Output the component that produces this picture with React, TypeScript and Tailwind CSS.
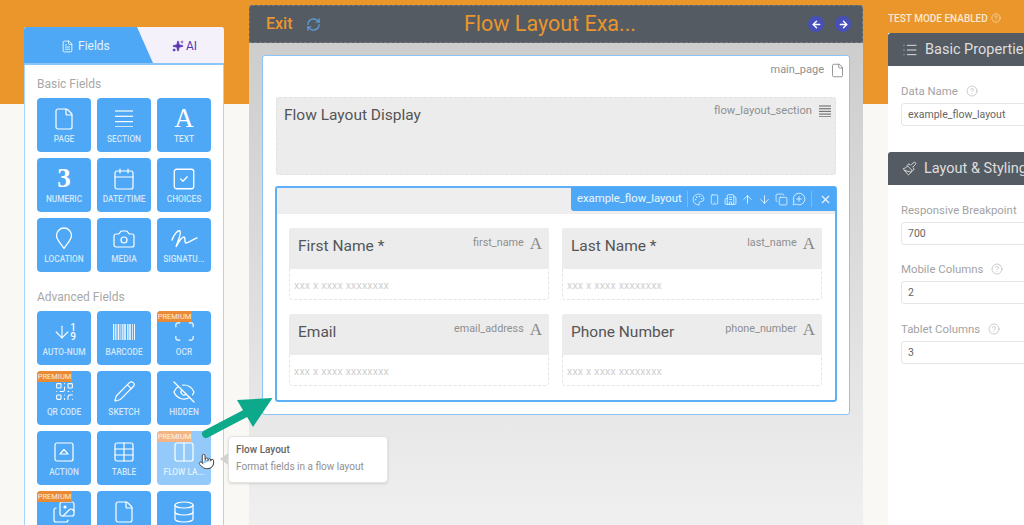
import React from "react";
import {
  File, Calendar, SquareCheck, Camera, ArrowDown, Scan, QrCode, Pencil, EyeOff, Table, Columns2, Images, Database,
  Palette, Smartphone, ArrowUp, Copy, MessageCirclePlus, X, Sparkles, RefreshCw, ArrowLeft, ArrowRight, CircleHelp, List, Paintbrush, FileText, Pointer, Building2,
} from "lucide-react";

const ic = { size: 22, strokeWidth: 1.2 };

const Lines = ({ w = 18, gap = 5.3, n = 4, cls = "text-white" }: { w?: number; gap?: number; n?: number; cls?: string }) => (
  <svg width={w} height={gap * (n - 1) + 2} className={cls} fill="none" stroke="currentColor" strokeWidth="1.2">
    {Array.from({ length: n }).map((_, i) => (
      <line key={i} x1="0" x2={w} y1={1 + i * gap} y2={1 + i * gap} />
    ))}
  </svg>
);

const Pin = () => (
  <svg width="18" height="23" viewBox="0 0 18 23" fill="none" stroke="white" strokeWidth="1.3">
    <path d="M9 21.5 C6 16.5 1.5 13 1.5 8.5 A7.5 7.5 0 0 1 16.5 8.5 C16.5 13 12 16.5 9 21.5Z" strokeLinejoin="round" />
  </svg>
);
const Sign = () => (
  <svg width="27" height="20" viewBox="0 0 27 20" fill="none" stroke="white" strokeWidth="1.4" strokeLinecap="round">
    <path d="M1 11 C3 5 7 1 9 2 C11 4 6 14 5 18 C8 12 11 8 13 8 C15 9 13 14 15 14 C18 14 22 10 26 9" />
  </svg>
);
const Barcode = () => (
  <svg width="22" height="16" viewBox="0 0 22 16" fill="white" opacity="0.9">
    {[0, 2, 3.5, 5, 7.5, 9, 10.5, 12, 14, 15.5, 17, 19, 21].map((x, i) => (
      <rect key={x} x={x} y="0" width={i % 3 === 0 ? 1.3 : 0.8} height="16" />
    ))}
  </svg>
);
const ActionIcon = () => (
  <svg width="20" height="20" viewBox="0 0 20 20" fill="none" stroke="white" strokeWidth="1.2">
    <rect x="1" y="1" width="18" height="18" rx="2" />
    <path d="M6 12 L10 7.5 L14 12 Z" strokeLinejoin="round" />
  </svg>
);
const SerifA = ({ cls = "text-white text-[27px]" }: { cls?: string }) => (
  <span className={`font-['Liberation_Serif',serif] leading-none ${cls}`}>A</span>
);

type T = { l: string; i: React.ReactNode; p?: boolean; hover?: boolean };
const basic: T[] = [
  { l: "PAGE", i: <File {...ic} size={24} /> },
  { l: "SECTION", i: <Lines /> },
  { l: "TEXT", i: <SerifA /> },
  { l: "NUMERIC", i: <span className="font-['Liberation_Serif',serif] font-bold text-white text-[27px] leading-none">3</span> },
  { l: "DATE/TIME", i: <Calendar {...ic} size={24} /> },
  { l: "CHOICES", i: <SquareCheck {...ic} size={26} /> },
  { l: "LOCATION", i: <Pin /> },
  { l: "MEDIA", i: <Camera {...ic} size={24} /> },
  { l: "SIGNATU...", i: <Sign /> },
];
const adv: T[] = [
  {
    l: "AUTO-NUM",
    i: (
      <span className="flex items-center">
        <ArrowDown size={20} strokeWidth={1.3} className="-mr-0.5" />
        <span className="flex flex-col text-[10px] font-medium leading-[9px] text-center">
          <span>1</span>
          <span>9</span>
        </span>
      </span>
    ),
  },
  { l: "BARCODE", i: <Barcode /> },
  { l: "OCR", p: true, i: <Scan {...ic} size={23} /> },
  { l: "QR CODE", p: true, i: <QrCode {...ic} size={21} /> },
  { l: "SKETCH", i: <Pencil {...ic} size={23} /> },
  { l: "HIDDEN", i: <EyeOff {...ic} size={24} /> },
  { l: "ACTION", i: <ActionIcon /> },
  { l: "TABLE", i: <Table {...ic} size={24} /> },
  { l: "FLOW LA...", p: true, hover: true, i: <Columns2 {...ic} size={24} /> },
  { l: "", p: true, i: <Images {...ic} size={24} /> },
  { l: "", i: <File {...ic} size={24} /> },
  { l: "", i: <Database {...ic} size={24} /> },
];

const Tile = ({ t }: { t: T }) => (
  <div className={`relative h-[54px] w-[54px] rounded-[4px] flex flex-col items-center text-white ${t.hover ? "bg-[#94cafa]" : "bg-[#4ea8f5]"}`}>
    {t.p && (
      <span className={`absolute left-0 top-0 h-[11px] w-[35px] rounded-tl-[4px] text-[7.5px] leading-[12px] text-center text-white/85 ${t.hover ? "bg-[#f3b583]" : "bg-[#e98a35]"}`}>
        PREMIUM
      </span>
    )}
    <div className="h-[27px] mt-[7px] flex items-center justify-center">{t.i}</div>
    <div className="text-[8.3px] font-medium leading-[12px] mt-[1px] text-white/75 whitespace-nowrap">{t.l}</div>
  </div>
);

const Grid = ({ items }: { items: T[] }) => (
  <div className="grid grid-cols-[54px_54px_54px] gap-x-[6px] gap-y-[6px]">
    {items.map((t, i) => (
      <Tile key={i} t={t} />
    ))}
  </div>
);

const Field = ({ label, name }: { label: string; name: string }) => (
  <div className="border border-dashed border-[#e4e4e4] rounded-[3px] h-[72px] bg-white">
    <div className="h-[41px] bg-[#ececec] flex justify-between pl-[9px] pr-[7px] -mx-px -mt-px rounded-t-[3px]">
      <span className="text-[15.5px] text-[#555] mt-[8px] leading-[20px]">{label}</span>
      <span className="flex items-start gap-[6px] mt-[7px]">
        <span className="text-[10.8px] text-[#8f8f8f] leading-[14px] mt-[1px]">{name}</span>
        <SerifA cls="text-[#888] text-[17px]" />
      </span>
    </div>
    <div className="text-[10.5px] tracking-[0.2px] text-[#cfcfcf] pl-[4px] mt-[10px] leading-[14px]">xxx x xxxx xxxxxxxx</div>
  </div>
);

const Prop = ({ label, help, value, mt }: { label: string; help?: boolean; value: string; mt: string }) => (
  <div className={mt}>
    <div className="flex items-center gap-[8px] text-[11.4px] text-[#a3a3a3] leading-[16px] h-[16px]">
      {label}
      {help && <CircleHelp size={12} strokeWidth={1.1} />}
    </div>
    <div className="mt-[4px] h-[23px] w-[200px] border border-[#e6e6e6] rounded-[3px] text-[10.5px] text-[#666] pl-[6px] leading-[21px]">{value}</div>
  </div>
);

const Head = ({ icon, text }: { icon: React.ReactNode; text: string }) => (
  <div className="h-[33px] bg-[#555b63] flex items-center pl-[14px] gap-[7px] text-[14.5px] text-[#dedede] whitespace-nowrap rounded-t-[3px]">
    {icon}
    {text}
  </div>
);

export default function App() {
  return (
    <div className="relative h-[525px] w-[1024px] overflow-hidden bg-[#f9f8f4] font-['Roboto',sans-serif]">
      <div className="absolute inset-x-0 top-0 h-[104px] bg-[#ea962b]" />
      <div className="relative flex items-start h-full">
        {/* Left panel */}
        <div className="ml-[24px] mt-[27px] w-[200px] shrink-0 h-[520px] bg-white border-x border-[#a9d4f9] rounded-t-[3px]">
          <div className="relative h-[38px] -mx-px bg-[#f4f1fb] rounded-t-[3px] border-b-[2px] border-[#8cc6f8]">
            <div className="absolute inset-0 bg-[#4ea8f5] rounded-tl-[3px] [clip-path:polygon(0_0,113px_0,129px_100%,0_100%)]" />
            <div className="absolute left-[37px] top-[10px] flex items-center gap-[3px] text-white/85 text-[12px]">
              <FileText size={13} strokeWidth={1.8} />
              <span className="ml-[1px]">Fields</span>
            </div>
            <div className="absolute left-[148px] top-[10px] flex items-center gap-[2px] text-[#5b33b5] text-[12px]">
              <Sparkles size={12} fill="currentColor" strokeWidth={1.4} />
              AI
            </div>
          </div>
          <div className="px-[12px]">
            <div className="text-[12px] leading-[16px] text-[#a8a8a8] mt-[11px] mb-[6px]">Basic Fields</div>
            <Grid items={basic} />
            <div className="text-[12px] leading-[16px] text-[#a8a8a8] mt-[17px] mb-[6px]">Advanced Fields</div>
            <Grid items={adv} />
          </div>
        </div>

        {/* Center */}
        <div className="ml-[25px] mt-[5px] w-[614px] shrink-0 h-[520px] bg-gradient-to-b from-[#cbcbcb] via-[#dcdcdc] to-[#f0f0f0] rounded-t-[3px]">
          <div className="relative h-[38px] bg-[#555b63] flex items-center pl-[16px] pr-[11px] rounded-t-[3px] border border-dashed border-[#74797f]">
            <span className="text-[16px] font-medium text-[#ea962b] w-[40px]">Exit</span>
            <RefreshCw size={15} strokeWidth={1.8} className="text-[#5ea3e6]" />
            <div className="absolute left-0 right-0 text-center text-[21.5px] text-[#ea962b] pr-[12px] whitespace-nowrap">Flow Layout Exa...</div>
            <div className="flex gap-[11px] ml-auto">
              <span className="h-[16px] w-[16px] rounded-full bg-[#4750b8] flex items-center justify-center text-white">
                <ArrowLeft size={11} strokeWidth={3} />
              </span>
              <span className="h-[16px] w-[16px] rounded-full bg-[#4750b8] flex items-center justify-center text-white">
                <ArrowRight size={11} strokeWidth={3} />
              </span>
            </div>
          </div>

          <div className="mx-[13px] mt-[12px] h-[360px] bg-white border border-[#8cc4f5] rounded-[3px] px-[13px]">
            <div className="flex justify-end items-center gap-[6px] h-[14px] mt-[7px] text-[11px] text-[#8f8f8f] -mr-[9px]">
              main_page
              <File size={15} strokeWidth={1.2} className="text-[#777]" />
            </div>
            <div className="mt-[20px] h-[78px] bg-[#ececec] rounded-[3px] border border-dashed border-[#e2e2e2] flex justify-between pl-[7px] pr-[4px]">
              <span className="text-[15.5px] text-[#555] mt-[6px] leading-[22px]">Flow Layout Display</span>
              <span className="flex items-center gap-[7px] h-[14px] mt-[6px] text-[11.2px] text-[#8f8f8f]">
                flow_layout_section
                <Lines w={12} gap={2.7} n={5} cls="text-[#777]" />
              </span>
            </div>

            <div className="relative mt-[11px] -mx-px h-[216px] border-[2px] border-[#5db0f6] rounded-[3px] bg-white">
              <div className="h-[26px] bg-[#eeeeee]" />
              <div className="absolute -right-px -top-px h-[24px] w-[265px] bg-[#4ea8f5] rounded-bl-[3px] flex items-center pl-[6px] text-white/90">
                <span className="text-[11.3px] w-[110px] whitespace-nowrap">example_flow_layout</span>
                <span className="flex items-center gap-[4px] border-x border-[#7cbdf5] h-[16px] pl-[4px] pr-[5px] mr-[7px]">
                  <Palette size={13} strokeWidth={1.4} />
                  <Smartphone size={11} strokeWidth={1.6} />
                  <Building2 size={13} strokeWidth={1.5} />
                  <ArrowUp size={13} strokeWidth={1.6} />
                  <ArrowDown size={13} strokeWidth={1.6} />
                  <Copy size={13} strokeWidth={1.4} />
                  <MessageCirclePlus size={14} strokeWidth={1.4} />
                </span>
                <X size={13} strokeWidth={2} />
              </div>
              <div className="grid grid-cols-[260px_260px] gap-x-[13px] gap-y-[14px] pl-[12px] pt-[14px]">
                <Field label="First Name *" name="first_name" />
                <Field label="Last Name *" name="last_name" />
                <Field label="Email" name="email_address" />
                <Field label="Phone Number" name="phone_number" />
              </div>
            </div>
          </div>
        </div>

        {/* Right */}
        <div className="ml-[25px] w-[240px] shrink-0">
          <div className="flex items-center gap-[3px] mt-[11px] h-[14px] text-[10px] font-medium text-[#fbe9cf] whitespace-nowrap">
            TEST MODE ENABLED
            <CircleHelp size={10} strokeWidth={1.5} />
          </div>
          <div className="mt-[8px] h-[500px] bg-white">
            <Head icon={<List size={16} strokeWidth={1.5} />} text="Basic Properties" />
            <div className="px-[13px] h-[86px] pt-[17px]">
              <Prop label="Data Name" help value="example_flow_layout" mt="" />
            </div>
            <Head icon={<Paintbrush size={15} strokeWidth={1.5} />} text="Layout & Styling" />
            <div className="px-[13px] pt-[17px]">
              <Prop label="Responsive Breakpoint" value="700" mt="" />
              <Prop label="Mobile Columns" help value="2" mt="mt-[16px]" />
              <Prop label="Tablet Columns" help value="3" mt="mt-[17px]" />
            </div>
          </div>
        </div>
      </div>

      {/* Tooltip */}
      <div className="absolute left-[228px] top-[436px] w-[160px] h-[47px] bg-white border border-[#e4e4e4] rounded-[4px] shadow-sm pl-[7px] pt-[6px]">
        <div className="text-[10px] font-medium text-[#666] leading-[14px]">Flow Layout</div>
        <div className="text-[10px] text-[#909090] leading-[14px] mt-[3px]">Format fields in a flow layout</div>
      </div>
      <div className="absolute left-[220px] top-[453px] h-0 w-0 border-y-[6px] border-r-[8px] border-y-transparent border-r-[#d2d2d2]" />

      {/* Annotation arrow */}
      <svg className="absolute left-[200px] top-[390px]" width="80" height="50" viewBox="200 390 80 50">
        <line x1="206" y1="434" x2="250" y2="411" stroke="#0ca98b" strokeWidth="8" strokeLinecap="round" />
        <polygon points="272.5,398 237,400 253,427" fill="#0ca98b" />
      </svg>

      {/* Cursor */}
      <Pointer size={17} strokeWidth={1.4} fill="white" className="absolute left-[198px] top-[453px] text-[#444]" />
    </div>
  );
}
